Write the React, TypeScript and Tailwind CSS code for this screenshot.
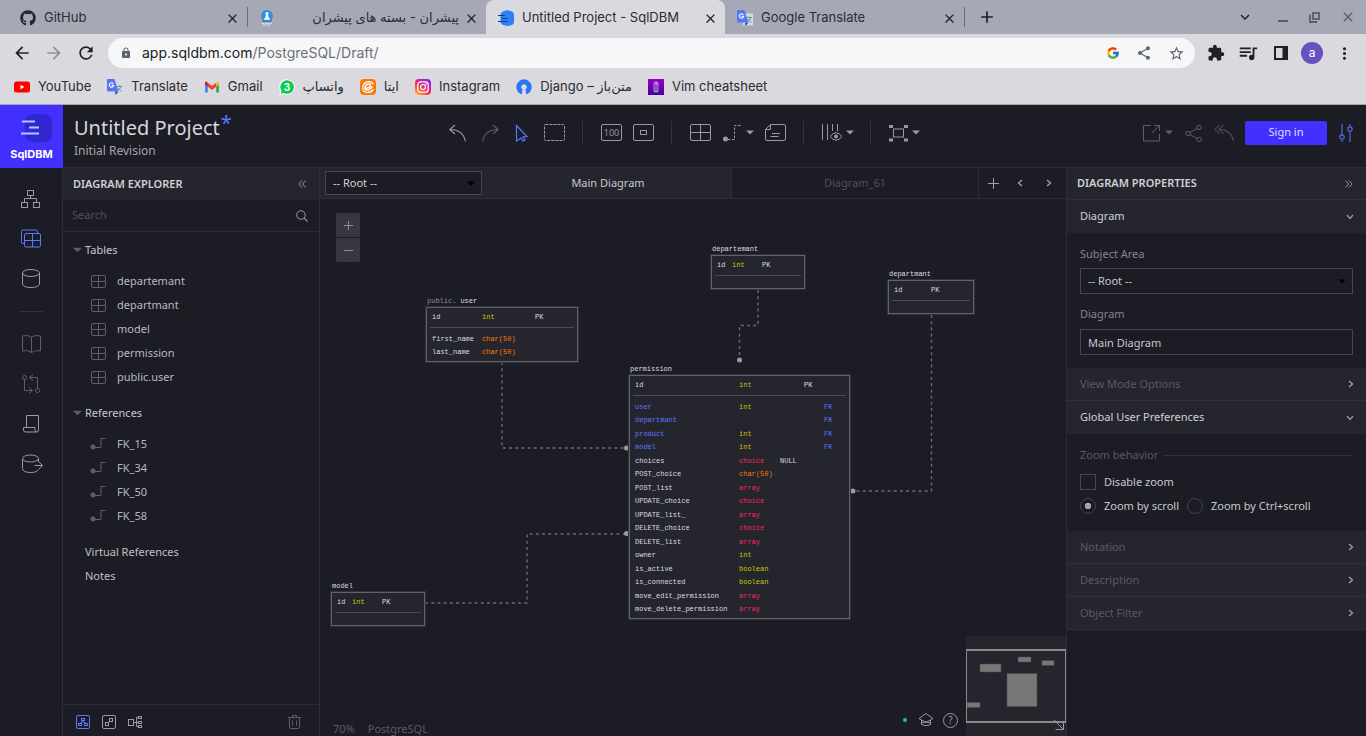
import type { ReactNode } from "react";
import {
  MdAdd,
  MdArrowBack,
  MdArrowForward,
  MdClose,
  MdExtension,
  MdKeyboardArrowDown,
  MdLock,
  MdMoreVert,
  MdQueueMusic,
  MdRefresh,
  MdShare,
  MdStarOutline,
} from "react-icons/md";
import { FaGithub } from "react-icons/fa";
import { FcGoogle } from "react-icons/fc";

/* ---------- small drawing helpers ---------- */

function Icon({ w, h, className = "", children }: { w: number; h: number; className?: string; children: ReactNode }) {
  return (
    <svg width={w} height={h} viewBox={`0 0 ${w} ${h}`} fill="none" stroke="currentColor" strokeWidth="1" className={"shrink-0 " + className} aria-hidden="true">
      {children}
    </svg>
  );
}

function Caret({ className = "" }: { className?: string }) {
  return (
    <Icon w={8} h={5} className={className}>
      <path d="M0 0.5h8L4 4.5z" fill="currentColor" stroke="none" />
    </Icon>
  );
}

function TableIcon({ w = 15, h = 13 }: { w?: number; h?: number }) {
  return (
    <Icon w={w} h={h}>
      <rect x="0.5" y="0.5" width={w - 1} height={h - 1} rx="1.5" />
      <path d={`M${Math.floor(w / 2) + 0.5} 0.5v${h - 1}M0.5 ${Math.floor(h / 2) + 0.5}h${w - 1}`} />
    </Icon>
  );
}

function FkIcon() {
  return (
    <Icon w={16} h={12}>
      <circle cx="3" cy="9" r="2.5" fill="currentColor" stroke="none" />
      <path d="M3 9.500h8V0.500h4.500" />
    </Icon>
  );
}

function ChevronRight({ className = "" }: { className?: string }) {
  return (
    <Icon w={6} h={8} className={className}>
      <path d="M1 1l3.500 3L1 7" strokeWidth="1.3" />
    </Icon>
  );
}

function ChevronDown() {
  return (
    <Icon w={8} h={6} className="text-[#9a9aa6]">
      <path d="M1 1l3 3.500L7 1" strokeWidth="1.2" />
    </Icon>
  );
}

/* ---------- favicons ---------- */

function SqlDbmFavicon() {
  return (
    <svg width="16" height="16" viewBox="0 0 16 16" aria-hidden="true">
      <path d="M4 2Q9-1 14 1.500Q16 2 16 5v6q0 3-2 4Q9 17 4 14.500Q2.500 14 2.500 11V5Q2.500 3 4 2z" fill="#2a80fa" />
      <path d="M0 5.500h7M4 8.500h5.500M0 11.500h9" stroke="#123a7c" strokeWidth="1" />
    </svg>
  );
}

function TranslateFavicon() {
  return (
    <svg width="16" height="16" viewBox="0 0 16 16" aria-hidden="true">
      <rect x="6" y="3.500" width="10" height="12" rx="1" fill="#d5dade" />
      <path d="M10 7.500h5M12.500 6.500v1M14 7.500q-.8 3-3.500 4.500M11 9q1 2 3.500 3.500" stroke="#6d8a96" fill="none" strokeWidth="0.9" />
      <path d="M8 12.500h3.500L8.500 16z" fill="#3a36d0" />
      <path d="M1 0h6.500l4 12.500H1q-1 0-1-1V1q0-1 1-1z" fill="#5577f5" />
      <path d="M6.300 4.600A2.200 2.200 0 1 0 6.700 6.400H4.700" stroke="#fff" strokeWidth="1.100" fill="none" />
    </svg>
  );
}

function PishranFavicon() {
  return (
    <svg width="14" height="16" viewBox="0 0 14 16" aria-hidden="true">
      <circle cx="7" cy="6" r="6" fill="#2f8fe0" />
      <path d="M2 9.500Q7 13.500 12 9.500L11 11.500H3z" fill="#2257b0" />
      <circle cx="7" cy="3.600" r="1.600" fill="#fff" />
      <path d="M5.800 5h2.400l.4 2.500 2 2.200H3.400l2-2.200z" fill="#fff" />
      <path d="M2 13.500h10M3 15h8" stroke="#dfe6f2" strokeWidth="1" strokeDasharray="2 0.600" />
    </svg>
  );
}

function YoutubeLogo() {
  return (
    <svg width="16" height="16" viewBox="0 0 16 16" aria-hidden="true">
      <rect y="2.500" width="16" height="11" rx="2.500" fill="#f00" />
      <path d="M6.500 5.800v4.400L10.300 8z" fill="#fff" />
    </svg>
  );
}

function GmailLogo() {
  return (
    <svg width="16" height="16" viewBox="0 0 16 16" aria-hidden="true">
      <path d="M1 4v9.500h2.800V6z" fill="#4285f4" />
      <path d="M15 4v9.500h-2.800V6z" fill="#34a853" />
      <path d="M3.800 3.700L8 7l4.200-3.300v4L8 11 3.800 7.700z" fill="#ea4335" />
      <path d="M1 4.200q0-2 1.700-1.500l1.100 1v4L1 5.600z" fill="#c5221f" />
      <path d="M15 4.200q0-2-1.700-1.500l-1.100 1v4L15 5.600z" fill="#fbbc04" />
    </svg>
  );
}

function WhatsappLogo() {
  return (
    <svg width="16" height="16" viewBox="0 0 16 16" aria-hidden="true">
      <path d="M8 .2a7.800 7.800 0 1 1-3.600 14.700L.3 16l1.100-3.800A7.800 7.800 0 0 1 8 .2z" fill="#fff" />
      <path d="M8 1.200a6.800 6.800 0 1 1-3.300 12.700l-2.900.8.800-2.800A6.800 6.800 0 0 1 8 1.200z" fill="#0ccb51" />
      <text x="8" y="11.500" textAnchor="middle" fontSize="10" fontWeight="700" fill="#fff" fontFamily="Inter, sans-serif">3</text>
    </svg>
  );
}

function EitaaLogo() {
  return (
    <svg width="16" height="16" viewBox="0 0 16 16" fill="none" aria-hidden="true">
      <rect width="16" height="16" rx="4" fill="#f57c10" />
      <path d="M5.500 9.500Q10.500 8.500 10.500 6.300Q10.300 4.600 8 5Q5 6 5 9.200Q5.300 11.400 8 11Q10.500 10.300 12.500 7.500" stroke="#fff" strokeWidth="1.500" />
      <path d="M13.200 5.500Q12.500 2.700 9 2.600Q3 3 2.700 9Q3 13 7 13.500Q11 13.500 13.500 10.500" stroke="#fff" strokeWidth="1.200" />
    </svg>
  );
}

function InstagramLogo() {
  return (
    <svg width="16" height="16" viewBox="0 0 16 16" fill="none" aria-hidden="true">
      <defs>
        <linearGradient id="insta" x1="0.1" y1="1" x2="0.8" y2="0">
          <stop offset="0" stopColor="#ffc83a" />
          <stop offset="0.350" stopColor="#fb4a3c" />
          <stop offset="0.650" stopColor="#d5209b" />
          <stop offset="1" stopColor="#7a2be0" />
        </linearGradient>
      </defs>
      <rect width="16" height="16" rx="4" fill="url(#insta)" />
      <rect x="2.800" y="2.800" width="10.400" height="10.400" rx="3" stroke="#fff" strokeWidth="1.200" />
      <circle cx="8" cy="8" r="2.500" stroke="#fff" strokeWidth="1.200" />
      <circle cx="11" cy="5" r="0.800" fill="#fff" />
    </svg>
  );
}

function MatnbazLogo() {
  return (
    <svg width="16" height="16" viewBox="0 0 16 16" fill="none" aria-hidden="true">
      <path d="M5 13.500A6.200 6.200 0 1 1 11 13.500L9.500 10A2.500 2.500 0 1 0 6.500 10z" fill="#2b76f6" stroke="#2b76f6" strokeWidth="3" strokeLinejoin="round" />
      <path d="M6 16L6.400 10.300A2.700 2.700 0 1 1 9.600 10.300L10 16z" fill="#dad9df" />
    </svg>
  );
}

function VimLogo() {
  return (
    <svg width="16" height="16" viewBox="0 0 16 16" fill="none" aria-hidden="true">
      <defs>
        <linearGradient id="vim" x1="0" y1="0" x2="0" y2="1">
          <stop offset="0" stopColor="#9a00c8" />
          <stop offset="1" stopColor="#3f009e" />
        </linearGradient>
      </defs>
      <rect width="16" height="16" fill="url(#vim)" />
      <rect x="5.500" y="2.500" width="5" height="11" rx="2.500" fill="#b98fe0" />
      <path d="M7 4.500v6a1 1 0 0 0 2 0v-5" stroke="#6a1bb0" strokeWidth="1" />
    </svg>
  );
}

/* ---------- browser frame ---------- */

function BrowserTab({ icon, title, active, rtl }: { icon: ReactNode; title: string; active?: boolean; rtl?: boolean }) {
  return (
    <div className={"flex w-[239px] items-center pl-3 pr-[7px] pt-0.5 " + (active ? "rounded-t-lg bg-[#dad9df]" : "")}>
      <span className="flex w-4 shrink-0 justify-center">{icon}</span>
      <span dir={rtl ? "rtl" : "ltr"} className="ml-2 flex-1 truncate">{title}</span>
      <button type="button" aria-label={"Close " + title} className="ml-1 flex size-4 items-center justify-center text-[#202124]">
        <MdClose size={15} />
      </button>
    </div>
  );
}

function TabSeparator() {
  return <span className="h-5 w-px shrink-0 bg-[#6d6e7a]" />;
}

const bookmarks = [
  { label: "YouTube", icon: <YoutubeLogo /> },
  { label: "Translate", icon: <TranslateFavicon /> },
  { label: "Gmail", icon: <GmailLogo /> },
  { label: "واتساپ", icon: <WhatsappLogo /> },
  { label: "ایتا", icon: <EitaaLogo /> },
  { label: "Instagram", icon: <InstagramLogo /> },
  { label: "Django – متن‌باز", icon: <MatnbazLogo /> },
  { label: "Vim cheatsheet", icon: <VimLogo /> },
];

function BrowserFrame() {
  return (
    <div className="shrink-0 border-b border-[#a5a6a8] bg-[#dad9df] font-[Inter,'DejaVu_Sans',sans-serif] text-[13px] text-[#2b2c31]">
      <div className="flex h-[34px] items-center bg-[#a7a8b5]">
        <div className="flex items-stretch self-stretch pl-2">
          <BrowserTab icon={<FaGithub size={16} className="text-[#24292f]" />} title="GitHub" />
          <div className="flex w-0 items-center"><TabSeparator /></div>
          <BrowserTab icon={<PishranFavicon />} title="پیشران - بسته های پیشران" rtl />
          <BrowserTab icon={<SqlDbmFavicon />} title="Untitled Project - SqlDBM" active />
          <BrowserTab icon={<TranslateFavicon />} title="Google Translate" />
        </div>
        <TabSeparator />
        <button type="button" aria-label="New tab" className="ml-3 text-[#202124]"><MdAdd size={20} /></button>
        <div className="ml-auto flex items-center gap-5 pr-2.5 text-[#5b5c66]">
          <button type="button" aria-label="Search tabs" className="text-[#202124]"><MdKeyboardArrowDown size={18} /></button>
          <button type="button" aria-label="Minimise" className="ml-1">
            <Icon w={10} h={14}><path d="M0 11h10" strokeWidth="2" /></Icon>
          </button>
          <button type="button" aria-label="Restore" className="ml-px">
            <Icon w={11} h={11}>
              <rect x="4" y="1" width="6" height="6" strokeWidth="1.800" />
              <path d="M1 2.500V10h7" strokeWidth="1.800" />
            </Icon>
          </button>
          <button type="button" aria-label="Close window"><MdClose size={16} /></button>
        </div>
      </div>

      <div className="flex h-[38px] items-center">
        <div className="flex w-[108px] shrink-0 items-center gap-3 pl-3">
          <button type="button" aria-label="Back" className="text-[#202124]"><MdArrowBack size={20} /></button>
          <button type="button" aria-label="Forward" className="text-[#8f9096]"><MdArrowForward size={20} /></button>
          <button type="button" aria-label="Reload" className="text-[#202124]"><MdRefresh size={20} /></button>
        </div>
        <div className="flex h-[30px] flex-1 items-center rounded-full bg-[#f6f7f9] pl-3 pr-2.5 text-[#5f6368]">
          <MdLock size={12} />
          <span className="ml-2.5 flex-1 text-sm text-[#6d7075]">
            <span className="text-[#202124]">app.sqldbm.com</span>/PostgreSQL/Draft/
          </span>
          <div className="flex items-center gap-4">
            <button type="button" aria-label="Search with Google"><FcGoogle size={14} /></button>
            <button type="button" aria-label="Share this page"><MdShare size={16} /></button>
            <button type="button" aria-label="Bookmark this tab"><MdStarOutline size={17} /></button>
          </div>
        </div>
        <div className="flex items-center gap-3 pl-3 pr-3 text-[#202124]">
          <button type="button" aria-label="Extensions"><MdExtension size={18} /></button>
          <button type="button" aria-label="Media controls"><MdQueueMusic size={22} /></button>
          <button type="button" aria-label="Side panel" className="ml-0.5">
            <Icon w={16} h={16}>
              <rect x="2" y="2" width="12" height="12" strokeWidth="2" />
              <path d="M9.500 2h4.500v12H9.500z" fill="currentColor" stroke="none" />
            </Icon>
          </button>
          <button type="button" className="flex size-[22px] items-center justify-center rounded-full bg-[#6651bf] text-xs text-white">a</button>
          <button type="button" aria-label="Menu"><MdMoreVert size={19} /></button>
        </div>
      </div>

      <nav className="flex h-8 items-center gap-4 px-3.5 pb-0.5">
        {bookmarks.map((b) => (
          <a key={b.label} href="#" className="flex items-center gap-2">
            {b.icon}
            <span>{b.label}</span>
          </a>
        ))}
      </nav>
    </div>
  );
}

/* ---------- left rail ---------- */

function Rail() {
  return (
    <aside className="flex w-[63px] shrink-0 flex-col border-r border-[#2d2d38]">
      <a href="#" className="-mr-px flex h-[63px] flex-col items-center bg-[#4230ff] text-white">
        <svg width="41" height="33" viewBox="0 0 41 33" className="mt-2 shrink-0" aria-hidden="true">
          <path d="M17 2.500Q27-.5 38 2.500Q41 4 41 9v12q0 5-3 7Q28 31 18 28Q14 26 14 21V9Q14 4 17 2.500z" fill="#3325cf" />
          <path d="M11 8.500h13M18 14.500h10M10 20.500h18" stroke="#9fd0ff" strokeWidth="2" />
        </svg>
        <span className="font-[Inter,sans-serif] text-[11px] leading-4 font-bold">SqlDBM</span>
      </a>
      <nav className="flex flex-col items-center pt-[11px] text-[#9a9aa6]">
        <button type="button" aria-label="Schemas" className="flex h-10 items-center">
          <Icon w={20} h={20}>
            <rect x="6.500" y="1.500" width="6" height="5" />
            <rect x="0.500" y="13.500" width="6" height="5" />
            <rect x="12.500" y="13.500" width="6" height="5" />
            <path d="M9.500 6.500v3M3.500 13.500v-4h12v4" />
          </Icon>
        </button>
        <button type="button" aria-label="Diagrams" className="flex h-10 items-center text-[#5a78ff]">
          <Icon w={20} h={20}>
            <path d="M3 14.500H2q-1.500 0-1.500-1.500V2.500Q.5 1 2 1h13q1.500 0 1.500 1.500V4" />
            <rect x="3.500" y="4.500" width="16" height="13.500" rx="1.500" />
            <path d="M11.500 4.500V18M3.500 11.500h16" />
          </Icon>
        </button>
        <button type="button" aria-label="Database" className="flex h-10 items-center">
          <Icon w={20} h={20}>
            <ellipse cx="10" cy="4" rx="8.500" ry="3.500" />
            <path d="M1.500 4v11Q2.500 18.500 10 18.500t8.500-3.500V4" />
          </Icon>
        </button>
        <span className="mt-3 mb-3 h-px w-6 bg-[#33333e]" />
        <button type="button" aria-label="Documentation" className="flex h-10 items-center text-[#5e5e6b]">
          <Icon w={20} h={20}>
            <path d="M10.500 18.500Q6.500 15.500 1.500 17V2Q6.500 .5 10.500 3Q14.500 .5 19.500 2v15Q14.500 15.500 10.500 18.500zM10.500 3v15.500" />
          </Icon>
        </button>
        <button type="button" aria-label="Compare" className="flex h-10 items-center text-[#5e5e6b]">
          <Icon w={20} h={20}>
            <circle cx="3.500" cy="3.500" r="2" />
            <circle cx="16.500" cy="16.500" r="2" />
            <path d="M3.500 5.500v11h7.500M8 13.500l3.500 3-3.500 3M16.500 14.500v-11H9M12 .5L8.500 3.500l3.500 3" />
          </Icon>
        </button>
        <button type="button" aria-label="Scripts" className="flex h-10 items-center">
          <Icon w={20} h={20}>
            <path d="M5.500 13.500V1.500h12v14.500q0 2-2 2h-11q-2 0-2-2v-2.500H14V15.500q0 2.500 1.500 2.500" />
          </Icon>
        </button>
        <button type="button" aria-label="Export" className="flex h-10 items-center">
          <Icon w={22} h={20} className="ml-0.5">
            <ellipse cx="9.500" cy="4.500" rx="8" ry="3.500" />
            <path d="M1.500 4.500v10Q2 18.500 9.500 18.500q6.500 0 8-3M17.500 4.500V8M13.500 11.500h8M18 8l3.500 3.500-3.500 3.500" />
          </Icon>
        </button>
      </nav>
    </aside>
  );
}

/* ---------- header ---------- */

function ToolDivider() {
  return <span className="h-6 w-px shrink-0 bg-[#33333e]" />;
}

function Header() {
  return (
    <header className="flex h-[63px] shrink-0 items-center border-b border-[#2d2d38] text-[#9a9aa6]">
      <div className="w-[386px] shrink-0 pl-[11px] pt-1">
        <h1 className="flex items-start text-xl leading-[26px] text-[#d6d6dc]">
          Untitled Project<sup className="top-0 ml-px text-xl leading-4 text-[#5a78ff]">*</sup>
        </h1>
        <p className="text-xs leading-5 text-[#a5a5ae]">Initial Revision</p>
      </div>
      <div className="-mt-[7px] flex flex-1 items-center">
        <div className="flex items-center gap-4">
          <button type="button" aria-label="Undo">
            <Icon w={17} h={18}><path d="M6 1L.8 5.500 6 10M1 5.500q13 0 15.500 12" strokeWidth="1.100" /></Icon>
          </button>
          <button type="button" aria-label="Redo" className="text-[#5e5e6b]">
            <Icon w={17} h={18}><path d="M11 1l5.200 4.500L11 10M16 5.500Q3 5.500.5 17.500" strokeWidth="1.100" /></Icon>
          </button>
          <button type="button" aria-label="Select" className="text-[#5a78ff]">
            <Icon w={13} h={18}><path d="M1.500 1.500l10.500 11-4 .5 2 3-2 1-2-3-4.500 3z" strokeWidth="1.200" /></Icon>
          </button>
          <button type="button" aria-label="Area select">
            <Icon w={21} h={17}><rect x="0.500" y="0.500" width="20" height="16" rx="1" strokeDasharray="3 1" /></Icon>
          </button>
        </div>
        <span className="w-[17px]" />
        <ToolDivider />
        <div className="ml-[18px] flex items-center gap-[11px]">
          <button type="button" className="flex h-[17px] w-[21px] items-center justify-center rounded-xs border border-[#9a9aa6] text-[9px] leading-none">100</button>
          <button type="button" aria-label="Fit to screen">
            <Icon w={21} h={17}>
              <rect x="0.500" y="0.500" width="20" height="16" rx="1.500" />
              <rect x="7.500" y="6.500" width="6" height="4" />
            </Icon>
          </button>
        </div>
        <span className="w-[17px]" />
        <ToolDivider />
        <div className="ml-[18px] flex items-center gap-[11px]">
          <button type="button" aria-label="Add table"><TableIcon w={21} h={17} /></button>
          <button type="button" aria-label="Add relationship" className="flex items-center gap-1">
            <Icon w={20} h={18}>
              <circle cx="3.500" cy="15" r="2.500" fill="currentColor" stroke="none" />
              <path d="M6 15.500h6.500V1.500H19" strokeDasharray="2.500 1.500" />
            </Icon>
            <Caret />
          </button>
          <button type="button" aria-label="Add note">
            <Icon w={21} h={17}>
              <path d="M5.500.5H19Q20.500.5 20.500 2v13q0 1.500-1.500 1.500H2Q.5 16.500.5 15V5.500zM5.500.5v5h-5M7 9.500h8M5.500 12.500h8" />
            </Icon>
          </button>
        </div>
        <span className="w-[17px]" />
        <ToolDivider />
        <button type="button" aria-label="View mode" className="ml-[18px] flex items-center gap-1">
          <Icon w={20} h={19}>
            <path d="M.5 1v16M5.500 1v16M10.500 1v7M15.500 1v7" />
            <path d="M8 13.500Q14 6 20 13.500Q14 21 8 13.500z" />
            <circle cx="14" cy="13.500" r="2" fill="currentColor" stroke="none" />
          </Icon>
          <Caret />
        </button>
        <span className="w-4" />
        <ToolDivider />
        <button type="button" aria-label="Align" className="ml-[18px] flex items-center gap-1">
          <Icon w={19} h={18}>
            <rect x="4.500" y="5" width="10" height="8" />
            <path d="M0 1h4v3H0zM15 1h4v3h-4zM0 14.500h4v3H0zM15 14.500h4v3h-4z" fill="currentColor" stroke="none" />
          </Icon>
          <Caret />
        </button>
        <div className="ml-auto flex items-center pr-[13px] text-[#5e5e6b]">
          <button type="button" aria-label="Export" className="flex items-center gap-[5px]">
            <Icon w={17} h={18}>
              <path d="M8 1.500H.5V17h16V10M11 1.500h5.500V7M16.500 1.500l-8 8" />
            </Icon>
            <Caret />
          </button>
          <button type="button" aria-label="Share" className="ml-3">
            <Icon w={17} h={18}>
              <circle cx="3" cy="9.500" r="2.200" />
              <circle cx="14" cy="3.500" r="2.200" />
              <circle cx="14" cy="15.500" r="2.200" />
              <path d="M5 8.500l7-4M5 10.500l7 4" />
            </Icon>
          </button>
          <button type="button" aria-label="Revert" className="ml-3">
            <Icon w={20} h={18}>
              <path d="M5.500 1L1 5.500l4.500 4.500M9.500 1L5 5.500l4.500 4.500M5 5.500Q17 5 19.500 17" />
            </Icon>
          </button>
          <button type="button" className="ml-[11px] h-6 w-[82px] rounded-xs bg-[#4230ff] text-[11px] text-[#dfe0ff]">Sign in</button>
          <button type="button" aria-label="Preferences" className="ml-3 text-[#4f6ae8]">
            <Icon w={14} h={18}>
              <path d="M3 0v11M3 15v3M11 0v2.500M11 7v11" strokeWidth="1.200" />
              <circle cx="3" cy="13" r="2.200" strokeWidth="1.200" />
              <circle cx="11" cy="5" r="2.200" strokeWidth="1.200" />
            </Icon>
          </button>
        </div>
      </div>
    </header>
  );
}

/* ---------- explorer ---------- */

function TreeGroup({ title, items, icon }: { title: string; items: string[]; icon: ReactNode }) {
  return (
    <section>
      <button type="button" className="flex h-6 items-center gap-[3px] pl-2.5 text-[#c8c8ce]">
        <Caret className="h-1.5 w-[9px] text-[#5e5e6b]" />
        {title}
      </button>
      <ul className="mt-[7px] text-[#b9b9c0]">
        {items.map((item) => (
          <li key={item} className="flex h-6 items-center pl-[27px]">
            <span className="flex w-[27px] text-[#5e5e6b]">{icon}</span>
            {item}
          </li>
        ))}
      </ul>
    </section>
  );
}

function Explorer() {
  return (
    <aside className="flex w-[257px] shrink-0 flex-col border-r border-[#2d2d38]">
      <div className="flex h-8 shrink-0 items-center justify-between bg-[#25252e] pl-2.5 pr-[13px]">
        <h2 className="font-semibold text-[#d0d0d6]">DIAGRAM EXPLORER</h2>
        <button type="button" aria-label="Collapse panel" className="text-[#9a9aa6]">
          <Icon w={8} h={8}><path d="M4 .5L.8 4 4 7.500M7.700 .5L4.500 4l3.200 3.500" /></Icon>
        </button>
      </div>
      <div className="flex h-8 shrink-0 items-center border-b border-[#2d2d38] pl-[9px] pr-[11px]">
        <input aria-label="Search" placeholder="Search" className="min-w-0 flex-1 bg-transparent outline-none placeholder:text-[#50505c]" />
        <Icon w={12} h={12} className="text-[#9a9aa6]">
          <circle cx="5" cy="5" r="4.300" />
          <path d="M8.200 8.200L11.500 11.500" strokeWidth="1.200" />
        </Icon>
      </div>
      <div className="flex flex-1 flex-col gap-3 pt-1.5">
        <TreeGroup title="Tables" items={["departemant", "departmant", "model", "permission", "public.user"]} icon={<span className="pl-px"><TableIcon /></span>} />
        <TreeGroup title="References" items={["FK_15", "FK_34", "FK_50", "FK_58"]} icon={<FkIcon />} />
        <div className="flex flex-col items-start pl-[22px] text-[#c0c0c6]">
          <button type="button" className="h-6">Virtual References</button>
          <button type="button" className="h-6">Notes</button>
        </div>
      </div>
      <div className="flex h-8 shrink-0 items-center gap-3 border-t border-[#2d2d38] pl-[13px] pr-[18px] pt-0.5 text-[#9a9aa6]">
        <button type="button" aria-label="Diagram view" className="text-[#5a78ff]">
          <Icon w={14} h={14}>
            <rect x="0.500" y="0.500" width="13" height="13" rx="1.500" />
            <rect x="5.500" y="3.500" width="3" height="2" />
            <path d="M7 5.500v1L4 8.500M7 6.500l3 2" />
            <rect x="2.500" y="8.500" width="3" height="2" />
            <rect x="8.500" y="8.500" width="3" height="2" />
          </Icon>
        </button>
        <button type="button" aria-label="Subject areas">
          <Icon w={14} h={14}>
            <rect x="0.500" y="0.500" width="13" height="13" rx="1.500" />
            <rect x="7.500" y="3.500" width="3" height="3" />
            <rect x="3.500" y="7.500" width="3" height="3" />
          </Icon>
        </button>
        <button type="button" aria-label="Schemas tree">
          <Icon w={14} h={14}>
            <rect x="0.500" y="4.500" width="5" height="6" />
            <path d="M5.500 7.500h5M10.500 2.500H8.500v9h2" />
            <rect x="10.500" y="1.500" width="3" height="2" />
            <rect x="10.500" y="6.500" width="3" height="2" />
            <rect x="10.500" y="10.500" width="3" height="2" />
          </Icon>
        </button>
        <button type="button" aria-label="Delete" className="ml-auto text-[#5e5e6b]">
          <Icon w={13} h={14}>
            <path d="M0 2.500h13M4.500 2.500v-2h4v2M1.500 2.500V12q0 1.500 1.500 1.500h7q1.500 0 1.500-1.500V2.500M4.500 5.500v5M8.500 5.500v5" />
          </Icon>
        </button>
      </div>
    </aside>
  );
}

/* ---------- diagram canvas ---------- */

type Row = { name: string; type?: string; nul?: string; pk?: string; fk?: string };
type DbTable = {
  title: string;
  schema?: string;
  place: string;
  cols: string[];
  key: Row;
  rows: Row[];
};

const tables: DbTable[] = [
  {
    title: "user",
    schema: "public.",
    place: "left-[106px] top-[96px] h-[67px] w-[152px]",
    cols: ["w-[50px]", "w-[53px]", "w-0", "w-auto", "w-0"],
    key: { name: "id", type: "int", pk: "PK" },
    rows: [{ name: "first_name", type: "char(50)" }, { name: "last_name", type: "char(50)" }],
  },
  {
    title: "departemant",
    place: "left-[391px] top-[44px] h-[46px] w-[94px]",
    cols: ["w-[15px]", "w-[30px]", "w-0", "w-auto", "w-0"],
    key: { name: "id", type: "int", pk: "PK" },
    rows: [],
  },
  {
    title: "departmant",
    place: "left-[568px] top-[69px] h-[46px] w-[86px]",
    cols: ["w-[37px]", "w-0", "w-0", "w-auto", "w-0"],
    key: { name: "id", pk: "PK" },
    rows: [],
  },
  {
    title: "permission",
    place: "left-[309px] top-[164px] h-[256px] w-[221px]",
    cols: ["w-[104px]", "w-[41px]", "w-[24px]", "w-[20px]", "w-auto"],
    key: { name: "id", type: "int", pk: "PK" },
    rows: [
      { name: "user", type: "int", fk: "FK" },
      { name: "departmant", fk: "FK" },
      { name: "product", type: "int", fk: "FK" },
      { name: "model", type: "int", fk: "FK" },
      { name: "choices", type: "choice", nul: "NULL" },
      { name: "POST_choice", type: "char(50)" },
      { name: "POST_list", type: "array" },
      { name: "UPDATE_choice", type: "choice" },
      { name: "UPDATE_list_", type: "array" },
      { name: "DELETE_choice", type: "choice" },
      { name: "DELETE_list", type: "array" },
      { name: "owner", type: "int" },
      { name: "is_active", type: "boolean" },
      { name: "is_connected", type: "boolean" },
      { name: "move_edit_permission", type: "array" },
      { name: "move_delete_permission", type: "array" },
    ],
  },
  {
    title: "model",
    place: "left-[11px] top-[381px] h-[46px] w-[94px]",
    cols: ["w-[15px]", "w-[30px]", "w-0", "w-auto", "w-0"],
    key: { name: "id", type: "int", pk: "PK" },
    rows: [],
  },
];

const typeColor: Record<string, string> = {
  int: "text-[#cdc400]",
  boolean: "text-[#cdc400]",
  "char(50)": "text-[#f57a00]",
  choice: "text-[#f8285a]",
  array: "text-[#f8285a]",
};

function Cells({ row }: { row: Row }) {
  return (
    <>
      <td className={"p-0 pl-0.5 " + (row.fk ? "text-[#5c78ff]" : "")}>{row.name}</td>
      <td className={"p-0 pl-0.5 " + (row.type ? typeColor[row.type] : "")}>{row.type}</td>
      <td className="p-0 pl-0.5">{row.nul}</td>
      <td className="p-0 pl-0.5">{row.pk}</td>
      <td className="p-0 pl-0.5 text-[#5c78ff]">{row.fk}</td>
    </>
  );
}

function TableNode({ table }: { table: DbTable }) {
  return (
    <article className={"absolute flex flex-col font-['Liberation_Mono',monospace] text-[7px] leading-[12px] whitespace-nowrap text-[#dcdce2] " + table.place}>
      <h3 className="h-3 shrink-0 pl-px">
        {table.schema && <span className="mr-1 text-[#8d8d98]">{table.schema}</span>}
        {table.title}
      </h3>
      <div className="flex-1 border border-[#62626f] bg-[#25252e] px-[3px] shadow-[0_0_0_1px_#32323c]">
        <table className="w-full table-fixed border-collapse">
          <colgroup>
            {table.cols.map((c, i) => <col key={i} className={c} />)}
          </colgroup>
          <thead>
            <tr className="h-[19px] border-b border-[#4c4c58]"><Cells row={table.key} /></tr>
          </thead>
          <tbody className="before:block before:h-1 before:content-['']">
            {table.rows.map((r) => (
              <tr key={r.name} className="odd:h-[14px] even:h-[13px]"><Cells row={r} /></tr>
            ))}
          </tbody>
        </table>
      </div>
    </article>
  );
}

function Connections() {
  return (
    <svg className="absolute left-0 top-0" width="746" height="537" viewBox="0 0 746 537" fill="none" aria-hidden="true">
      <g stroke="#6a6a76" strokeWidth="1.400" strokeDasharray="3 3.200">
        <path d="M182 163V249H306" />
        <path d="M438 91V126.500H419.500V161" />
        <path d="M611.500 116V292H533" />
        <path d="M105 404H207V335H306" />
      </g>
      <g fill="#9a9aa6">
        <circle cx="306.500" cy="249" r="2.500" />
        <circle cx="419.500" cy="161" r="2.500" />
        <circle cx="533" cy="292" r="2.500" />
        <circle cx="306.500" cy="334.500" r="2.500" />
      </g>
    </svg>
  );
}

function Minimap() {
  return (
    <svg width="100" height="100" viewBox="0 0 100 100" fill="none" aria-label="Minimap" role="img" className="shrink-0">
      <rect width="100" height="100" fill="#25252e" />
      <g fill="#777777" stroke="#4a4a52" strokeWidth="0.500">
        <rect x="14" y="28" width="21" height="8" />
        <rect x="52" y="21" width="13" height="5" />
        <rect x="76" y="24.500" width="12" height="5" />
        <rect x="41" y="37.500" width="30" height="33" />
        <rect x="1" y="66.500" width="13" height="5" />
      </g>
      <path d="M25 36v11h16M58 26v4h-2v5M82 30v23H71M14 69h14v-10h13" stroke="#2c2c36" strokeWidth="0.600" />
      <path d="M0 14h100M0 86h100" stroke="#8b8b8b" strokeWidth="2" />
      <path d="M.5 14v72M99.500 14v72" stroke="#8b8b8b" strokeWidth="1" />
      <path d="M88 84l9 9M97.500 85.500v8h-8" stroke="#9a9aa6" />
    </svg>
  );
}

function Canvas() {
  return (
    <main className="flex min-w-0 flex-1 flex-col">
      <div className="flex h-[31px] shrink-0 items-stretch border-b border-[#2d2d38]">
        <div className="grid shrink-0 items-center bg-[#25252e] pl-[5px] text-[#d0d0d6]">
          <select aria-label="Subject area" defaultValue="root" className="col-start-1 row-start-1 h-6 w-[157px] appearance-none border border-[#454553] bg-[#1c1c24] pl-[7px]">
            <option value="root">-- Root --</option>
          </select>
          <Caret className="pointer-events-none col-start-1 row-start-1 mr-[7px] justify-self-end text-black" />
        </div>
        <button type="button" className="flex-1 border-r border-[#2d2d38] bg-[#25252e] pl-[3px] text-[#c8c8ce]">Main Diagram</button>
        <button type="button" className="flex-1 border-r border-[#2d2d38] text-[#50505c]">Diagram_61</button>
        <div className="flex w-[87px] shrink-0 items-center pl-[9px] text-[#a2a2ad]">
          <button type="button" aria-label="Add diagram">
            <Icon w={11} h={11}><path d="M5.500 0v11M0 5.500h11" /></Icon>
          </button>
          <button type="button" aria-label="Previous diagram" className="ml-[18px]"><ChevronRight className="rotate-180" /></button>
          <button type="button" aria-label="Next diagram" className="ml-[23px]"><ChevronRight /></button>
        </div>
      </div>
      <div className="relative flex-1 overflow-hidden">
        <Connections />
        {tables.map((t) => <TableNode key={t.title} table={t} />)}
        <div className="absolute left-4 top-3.5 flex flex-col gap-px text-[#8d8d98]">
          <button type="button" aria-label="Zoom in" className="flex size-6 items-center justify-center rounded-t-xs bg-[#373742]">
            <Icon w={9} h={9}><path d="M4.500 0v9M0 4.500h9" /></Icon>
          </button>
          <button type="button" aria-label="Zoom out" className="flex size-6 items-center justify-center rounded-b-xs bg-[#373742]">
            <Icon w={9} h={9}><path d="M0 4.500h9" /></Icon>
          </button>
        </div>
        <div className="absolute inset-x-0 bottom-0 flex items-end pl-[13px] text-[#5a5a66]">
          <span className="leading-[14px]">70%</span>
          <span className="ml-[13px] leading-[14px]">PostgreSQL</span>
          <div className="ml-auto mb-2 flex items-center text-[#9a9aa6]">
            <span className="mr-[11px] size-1 rounded-full bg-[#00d98b]" />
            <button type="button" aria-label="Tutorials">
              <Icon w={16} h={16}>
                <path d="M8 1.500L15 6.500 8 10.500 1 6.500zM3.500 8v4.500Q8 15 12.500 12.500V8M3.500 11Q8 8.500 12.500 11" />
              </Icon>
            </button>
            <button type="button" aria-label="Help" className="ml-[9px] mr-2 flex size-[15px] items-center justify-center rounded-full border border-[#9a9aa6] text-[10px] leading-none">?</button>
          </div>
          <Minimap />
        </div>
      </div>
    </main>
  );
}

/* ---------- properties ---------- */

function SectionBar({ title, open }: { title: string; open?: boolean }) {
  return (
    <button
      type="button"
      className={"flex h-[33px] w-full shrink-0 items-center justify-between bg-[#25252e] pl-[13px] pr-3 " + (open ? "text-[#d0d0d6]" : "border-b border-[#30303b] text-[#5a5a66]")}
    >
      {title}
      {open ? <ChevronDown /> : <ChevronRight className="text-[#a2a2ad]" />}
    </button>
  );
}

function Properties() {
  return (
    <aside className="flex w-[300px] shrink-0 flex-col border-l border-[#2d2d38] text-[#c8c8ce]">
      <div className="flex h-8 shrink-0 items-center justify-between border-b border-[#30303b] bg-[#25252e] pl-2.5 pr-[13px]">
        <h2 className="font-semibold text-[#d0d0d6]">DIAGRAM PROPERTIES</h2>
        <button type="button" aria-label="Collapse properties" className="text-[#9a9aa6]">
          <Icon w={8} h={8}><path d="M.5 .5L3.700 4 .5 7.500M4 .5L7.200 4 4 7.500" /></Icon>
        </button>
      </div>
      <SectionBar title="Diagram" open />
      <div className="flex flex-col px-[13px] pt-3 pb-[13px]">
        <label htmlFor="area" className="leading-[18px] text-[#85858f]">Subject Area</label>
        <div className="mt-[5px] grid items-center">
          <select id="area" defaultValue="root" className="col-start-1 row-start-1 h-[26px] w-full appearance-none border border-[#454553] bg-transparent pl-[7px]">
            <option value="root">-- Root --</option>
          </select>
          <Caret className="pointer-events-none col-start-1 row-start-1 mr-[7px] justify-self-end text-black" />
        </div>
        <label htmlFor="name" className="mt-[11px] leading-[18px] text-[#85858f]">Diagram</label>
        <input id="name" defaultValue="Main Diagram" className="mt-[6px] h-[26px] w-full border border-[#454553] bg-transparent px-[7px]" />
      </div>
      <SectionBar title="View Mode Options" />
      <SectionBar title="Global User Preferences" open />
      <fieldset className="flex flex-col px-[13px] pt-3 pb-[13px]">
        <div className="flex items-center gap-[5px] text-[#5a5a66]">
          <span className="leading-[18px]">Zoom behavior</span>
          <span className="h-px flex-1 bg-[#30303b]" />
        </div>
        <label className="mt-[6px] flex h-6 items-center gap-2">
          <input type="checkbox" className="size-4 appearance-none border border-[#454553]" />
          Disable zoom
        </label>
        <div className="flex h-6 items-center">
          <label className="flex items-center gap-2">
            <input type="radio" name="zoom" defaultChecked className="size-4 appearance-none rounded-full border border-[#454553] bg-radial from-[#a5a5ae] from-45% to-transparent to-50% bg-size-[10px_10px] bg-center bg-no-repeat" />
            Zoom by scroll
          </label>
          <label className="ml-2 flex items-center gap-2">
            <input type="radio" name="zoom" className="size-4 appearance-none rounded-full border border-[#454553]" />
            Zoom by Ctrl+scroll
          </label>
        </div>
      </fieldset>
      <SectionBar title="Notation" />
      <SectionBar title="Description" />
      <SectionBar title="Object Filter" />
    </aside>
  );
}

export default function App() {
  return (
    <div className="flex h-screen flex-col overflow-hidden bg-[#1c1c24]">
      <BrowserFrame />
      <div className="flex min-h-0 flex-1 font-['Noto_Sans',sans-serif] text-[11px]">
        <Rail />
        <div className="flex min-w-0 flex-1 flex-col">
          <Header />
          <div className="flex min-h-0 flex-1">
            <Explorer />
            <Canvas />
            <Properties />
          </div>
        </div>
      </div>
    </div>
  );
}
